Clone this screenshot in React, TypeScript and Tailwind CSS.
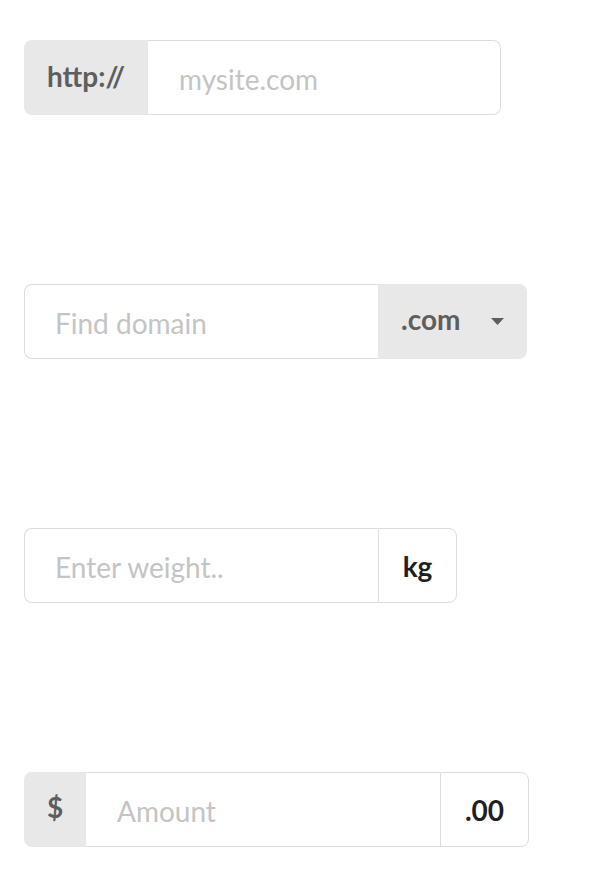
import React from "react";

const font = { fontFamily: "Lato, 'Helvetica Neue', Arial, sans-serif" };

export default function App() {
  return (
    <div className="min-h-[882px] w-[592px] bg-white pl-[24px] pt-[40px]" style={font}>
      <div className="flex flex-col gap-[169px]">
        {/* Row 1 */}
        <div className="flex h-[75px] w-[477px]">
          <div className="flex w-[124px] items-center justify-center rounded-l-[8px] bg-[#e8e8e8] pb-[4px] text-[28px] font-bold text-[#5e5e5e]">
            http://
          </div>
          <div className="flex flex-1 items-center rounded-r-[8px] border border-l-0 border-[#dcdcdc] pl-[31px] pt-[2px] text-[28px] text-[#c4c4c4]">
            mysite.com
          </div>
        </div>

        {/* Row 2 */}
        <div className="flex h-[75px] w-[503px]">
          <div className="flex w-[354px] items-center rounded-l-[8px] border border-r-0 border-[#dcdcdc] pl-[30px] pt-[2px] text-[28px] text-[#c4c4c4]">
            Find domain
          </div>
          <div className="flex flex-1 items-center rounded-r-[8px] bg-[#e8e8e8] pl-[23px] text-[28px] font-bold text-[#5e5e5e]">
            <span className="mb-[5px]">.com</span>
            <svg className="ml-[31px]" width="13" height="7" viewBox="0 0 13 7">
              <path d="M0 0 H13 L6.5 7 Z" fill="#5e5e5e" />
            </svg>
          </div>
        </div>

        {/* Row 3 */}
        <div className="flex h-[75px] w-[433px]">
          <div className="flex w-[354px] items-center rounded-l-[8px] border border-r-0 border-[#dcdcdc] pl-[30px] pt-[2px] text-[28px] text-[#c4c4c4]">
            Enter weight..
          </div>
          <div className="flex flex-1 items-center justify-center rounded-r-[8px] border border-[#dcdcdc] bg-white text-[28px] font-bold text-[#1f1f1f]">
            kg
          </div>
        </div>

        {/* Row 4 */}
        <div className="flex h-[75px] w-[505px]">
          <div className="flex w-[62px] items-center justify-center rounded-l-[8px] bg-[#e8e8e8] pb-[6px] text-[28px] font-bold text-[#5e5e5e]">
            $
          </div>
          <div className="flex w-[354px] items-center border-y border-[#dcdcdc] pl-[31px] pt-[2px] text-[28px] text-[#c4c4c4]">
            Amount
          </div>
          <div className="flex flex-1 items-center justify-center rounded-r-[8px] border border-[#dcdcdc] bg-white text-[28px] font-bold text-[#1f1f1f]">
            .00
          </div>
        </div>
      </div>
    </div>
  );
}
